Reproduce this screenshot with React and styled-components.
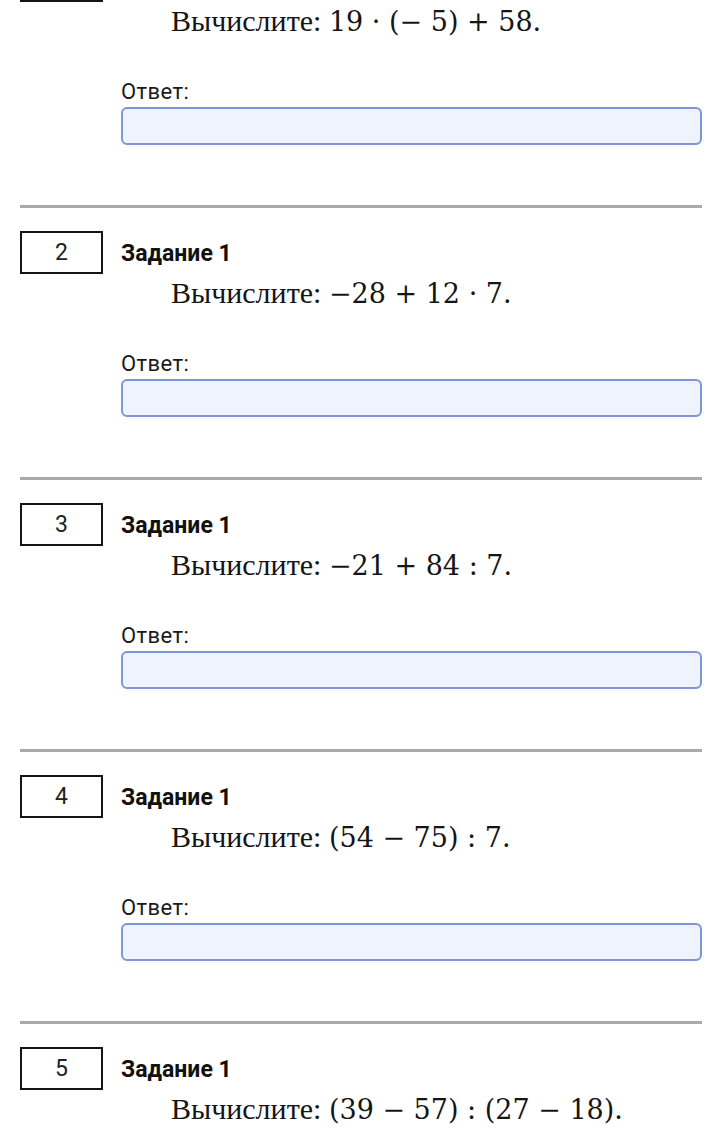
import React from 'react';
import styled, { createGlobalStyle } from 'styled-components';

const GlobalStyle = createGlobalStyle`
	body {
		margin: 0;
		background: #FFFFFF;
		font-family: Roboto, "Liberation Sans", sans-serif;
		color: #111111;
	}
`;

const StyledPage = styled.div`
	width: 720px;
	height: 1145px;
	overflow: hidden;
`;

const StyledList = styled.div`
	margin-top: -67px;
`;

const StyledTask = styled.section`
	margin: 0px 20px 0px 20px;
	border-top: 3px solid #AAAAAA;
	display: grid;
	grid-template-columns: 83px 1fr;
	column-gap: 18px;
	align-items: start;
	height: 269px;
	margin-right: 18px;
`;

const StyledNumber = styled.div`
	margin-top: 23px;
	height: 43px;
	box-sizing: border-box;
	border: 2px solid #151515;
	display: flex;
	align-items: center;
	justify-content: center;
	font-size: 23px;
	color: #222222;
`;

const StyledBody = styled.div`
	display: flex;
	flex-direction: column;
`;

const StyledTitle = styled.h4`
	margin: 33px 0px 0px 0px;
	font-size: 23px;
	line-height: 26px;
	font-weight: 700;
	color: #111111;
`;

const StyledMath = styled.p`
	margin: 8px 0px 0px 50px;
	font-family: "Liberation Serif", serif;
	font-size: 30px;
	line-height: 36px;
	color: #151515;
	white-space: nowrap;
`;

const StyledExpression = styled.span`
	font-family: "DejaVu Serif", "Liberation Serif", serif;
	font-size: 27px;
`;

const StyledLabel = styled.label`
	margin-top: 40px;
	font-size: 22px;
	line-height: 23px;
	letter-spacing: 0.4px;
	color: #1A1A1A;
`;

const StyledInput = styled.input`
	margin-top: 4px;
	height: 38px;
	box-sizing: border-box;
	width: 100%;
	border: 2px solid #7F95D9;
	border-radius: 6px;
	background: #EFF3FD;
	outline: none;
`;

const tasks = [
	{ id: 1, expr: '19 · (− 5) + 58.' },
	{ id: 2, expr: '−28 + 12 · 7.' },
	{ id: 3, expr: '−21 + 84 : 7.' },
	{ id: 4, expr: '(54 − 75) : 7.' },
	{ id: 5, expr: '(39 − 57) : (27 − 18).' }
];

const Task = ({ id, expr }) => (
	<StyledTask>
		<StyledNumber>{id}</StyledNumber>
		<StyledBody>
			<StyledTitle>Задание 1</StyledTitle>
			<StyledMath>
				Вычислите: <StyledExpression>{expr}</StyledExpression>
			</StyledMath>
			<StyledLabel>
				Ответ:
			</StyledLabel>
			<StyledInput type="text" />
		</StyledBody>
	</StyledTask>
);

const App = () => (
	<StyledPage>
		<GlobalStyle />
		<StyledList>
			{tasks.map(task => <Task key={task.id} {...task} />)}
		</StyledList>
	</StyledPage>
);

export default App;
